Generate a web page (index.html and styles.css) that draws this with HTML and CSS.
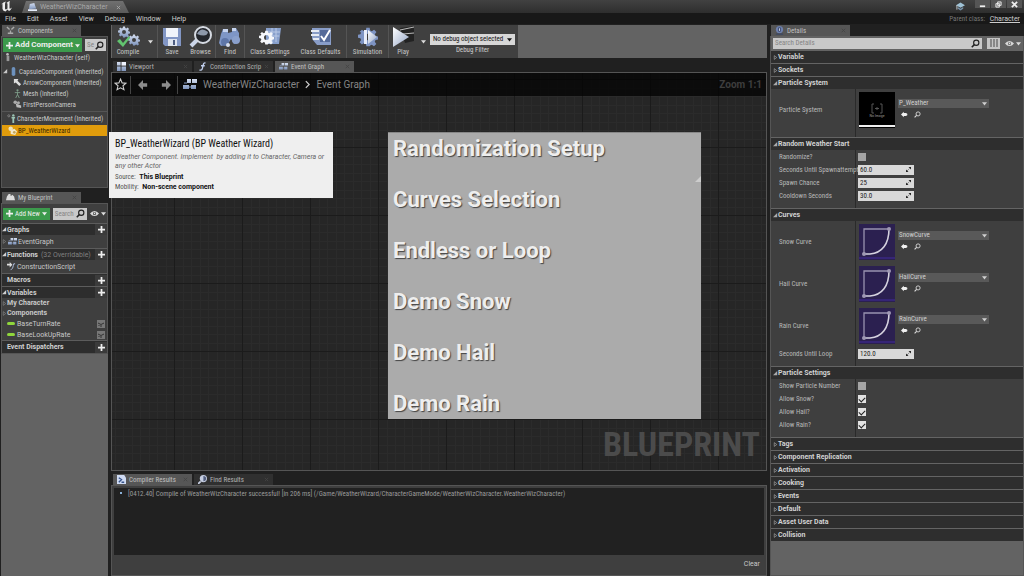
FILE: index.html
```html
<!DOCTYPE html>
<html lang="en">
<head>
<meta charset="utf-8">
<title>WeatherWizCharacter</title>
<link rel="stylesheet" href="styles.css">
</head>
<body>
<svg class="sprite" aria-hidden="true">
  <defs>
    <linearGradient id="steel" x1="0" y1="0" x2="0" y2="1"><stop offset="0" stop-color="#d5def0"/><stop offset="1" stop-color="#7f95bd"/></linearGradient>
    <linearGradient id="silver" x1="0" y1="0" x2="1" y2="1"><stop offset="0" stop-color="#ffffff"/><stop offset="1" stop-color="#93a5c6"/></linearGradient>
    <symbol id="gear" viewBox="0 0 24 24"><path fill-rule="evenodd" d="M10 1h4l.6 3.2 2 .9 2.7-1.9 2.8 2.8-1.9 2.7.9 2 3 .6v3.6l-3.1.7-.9 2 1.9 2.7-2.8 2.8-2.7-1.9-2 .9L14 23h-4l-.6-3-2-.9-2.700 1.900-2.800-2.800 1.900-2.700-.9-2-3-.7v-3.600l3-.6.9-2L1.900 6l2.800-2.800 2.700 1.900 2-.9zM12 8a4 4 0 1 0 0 8 4 4 0 0 0 0-8z"/></symbol>
    <symbol id="search" viewBox="0 0 12 12"><circle cx="7" cy="5" r="3.500" fill="none" stroke="currentColor" stroke-width="1.500"/><path d="M4.500 7.500 1 11" stroke="currentColor" stroke-width="2"/></symbol>
    <symbol id="eye" viewBox="0 0 14 10"><path fill="#d8d8d8" fill-rule="evenodd" d="M0 5Q3 1 7 1t7 4Q11 9 7 9T0 5zm7-2.500a2.500 2.500 0 1 0 0 5 2.500 2.500 0 0 0 0-5z"/><circle cx="7" cy="4.800" r="1.300" fill="#e4e4e4"/></symbol>
    <symbol id="down" viewBox="0 0 8 6"><path d="M0 1h8L4 6z" fill="currentColor"/></symbol>
    <symbol id="plus" viewBox="0 0 8 8"><path d="M3 0h2v3h3v2H5v3H3V5H0V3h3z" fill="currentColor"/></symbol>
    <symbol id="open" viewBox="0 0 6 6"><path d="M0 5 5 0v5z" fill="currentColor"/></symbol>
    <symbol id="shut" viewBox="0 0 6 8"><path d="M1 1v6l4-3z" fill="none" stroke="currentColor"/></symbol>
    <symbol id="cross" viewBox="0 0 6 6"><path d="M1 1l4 4M5 1 1 5" stroke="currentColor"/></symbol>
    <symbol id="left" viewBox="0 0 12 12"><path d="M0 6 6 0v4h5v4H6v4z" fill="currentColor"/></symbol>
    <symbol id="right" viewBox="0 0 12 12"><path d="M12 6 6 0v4H1v4h5v4z" fill="currentColor"/></symbol>
    <symbol id="graph" viewBox="0 0 14 11"><path fill="url(#steel)" d="M4 0h4v4H4zM9 0h5v4H9zM0 6h6v4H0zM8 6h5v4H8z"/><path d="M1 4h3M6 8h2" stroke="#8698bb"/></symbol>
    <symbol id="viewport" viewBox="0 0 10 10"><path fill="url(#steel)" d="M0 0h4v4H0zM0 5h4v5H0zM5 5h5v5H5z"/><path fill="#eef3ff" d="M5 0h5v4H5z"/></symbol>
    <symbol id="func" viewBox="0 0 10 12"><path d="M9 1.500Q6.500.5 6 4L5 8Q4 12 1 10.500M3 5h5" fill="none" stroke="#c2d0ee" stroke-width="1.700"/></symbol>
    <symbol id="spin" viewBox="0 0 8 8"><path d="M4 0h4v4zM0 4v4h4z" fill="#222"/><path d="m2 6 4-4" stroke="#222" stroke-dasharray="1.500 1"/></symbol>
    <symbol id="use-asset" viewBox="0 0 10 8"><path d="M0 4 4 0v2h4v1h1v2H8v1H4v2z" fill="#f0f0f0"/></symbol>
    <symbol id="curve" viewBox="0 0 36 36"><path fill="#2b2050" d="M0 0h36v36H0z"/><path d="M5 30V5h25" fill="none" stroke="#9992b0" stroke-width="1.300"/><path d="M5 30h6C23 29 30 20 30 5" fill="none" stroke="#d5d2df" stroke-width="1.600"/><circle cx="5" cy="30" r="2" fill="#9f98b4"/><circle cx="30" cy="5" r="2" fill="#9f98b4"/><path d="M0 34h36" stroke="#432a9d" stroke-width="1"/></symbol>
  </defs>
</svg>

<div class="app">
  <header class="titlebar">
    <svg class="logo" viewBox="0 0 24 26"><path fill="#eee" d="M1 9Q4 4 10 3 8 5 8 8v9q0 2 2 2 2-1 3-2V8q0-2-2-2 3-3 7-4-1 2-1 4v10q0 2 2 1l3-2q-2 5-6 7l-3-3-4 4q-5-1-6-5V9q0-2-2-1z"/></svg>
    <div class="title-tab"><svg class="i9" viewBox="0 0 10 10"><path fill="url(#steel)" d="m2 1 5-1 2 6-8 1z"/><path fill="#e8eefc" d="M0 7h10v2H0z"/></svg><span>WeatherWizCharacter</span><svg class="i5"><use href="#cross"/></svg></div>
    <div class="window-tools">
      <svg class="cap" viewBox="0 0 10 9"><path fill="#9fc2d6" d="m0 3 5-3 5 3-5 3z"/><path fill="#7590a8" d="M2 5v2l3 2 3-2V5L5 7z"/><path d="M1 3v5" stroke="#ccc"/></svg>
      <div class="window-buttons">
        <button aria-label="Minimize"><svg viewBox="0 0 8 8"><path d="M1 5h6v2H1z" fill="#eee"/></svg></button>
        <button aria-label="Restore"><svg viewBox="0 0 8 8"><path d="M3 1h4v4H3zM1 3h4v4H1z" stroke="#eee" fill="#777"/></svg></button>
        <button aria-label="Close"><svg viewBox="0 0 8 8"><path d="m1 1 6 6M7 1 1 7" stroke="#eee" stroke-width="2"/></svg></button>
      </div>
    </div>
  </header>
  <nav class="menubar">
    <button>File</button><button>Edit</button><button>Asset</button><button>View</button><button>Debug</button><button>Window</button><button>Help</button>
    <span class="parent">Parent class: <a href="#">Character</a></span>
  </nav>

  <div class="workspace">
    <aside class="left">
      <div class="tab panel-tab active"><svg class="i9" viewBox="0 0 10 10"><path d="m1 1 3 3M9 1 6 4M5 5v4M2 8h6" stroke="#aaa" stroke-width="1.500"/></svg><span>Components</span><svg class="i5"><use href="#cross"/></svg></div>
      <section class="panel components">
        <div class="tools">
          <button class="green wide"><svg class="i7"><use href="#plus"/></svg>Add Component<svg class="i5"><use href="#down"/></svg></button>
          <label class="search"><input type="text" placeholder="Se" aria-label="Search components"><svg class="i9"><use href="#search"/></svg></label>
        </div>
        <div class="item self"><svg class="i9" viewBox="0 0 10 10"><circle cx="5" cy="1.500" r="1.500" fill="#bbb"/><path d="M4 3h3v6H4z" fill="#999"/></svg>WeatherWizCharacter (self)</div>
        <ul class="tree">
          <li class="item"><svg class="i5"><use href="#open"/></svg><svg class="i9" viewBox="0 0 10 10"><rect x="3" width="4" height="10" rx="2" fill="#6d91bd"/></svg>CapsuleComponent (Inherited)</li>
          <li class="item child"><svg class="i9" viewBox="0 0 10 10"><path d="M1 1h5L5 3l4 4-2 2-4-4-2 1z" fill="#ddd"/></svg>ArrowComponent (Inherited)</li>
          <li class="item child"><svg class="i9" viewBox="0 0 10 10"><circle cx="5" cy="1.500" r="1.200" fill="#7d9c88"/><path d="M2 4h6M5 3v4M5 6 3 10M5 6l2 4" stroke="#7d9c88"/></svg>Mesh (Inherited)</li>
          <li class="item child"><svg class="i9" viewBox="0 0 10 10"><circle cx="2.500" cy="2.500" r="2" fill="#aaa"/><circle cx="6" cy="3" r="1.700" fill="#aaa"/><path d="m3 4 6 2v3L4 8z" fill="#bbb"/></svg>FirstPersonCamera</li>
          <li class="item movement"><svg class="i9" viewBox="0 0 10 10"><circle cx="2" cy="2" r="1.200" fill="none" stroke="#999" stroke-width=".7"/><circle cx="7" cy="1.500" r="1.300" fill="#9cc4b5"/><path d="M5 4h4M7 3v7" stroke="#9cc4b5" stroke-width="2"/></svg>CharacterMovement (Inherited)</li>
          <li class="item selected"><svg class="i9" viewBox="0 0 10 10"><circle cx="3" cy="3" r="2.500" fill="#eee2bf"/><path d="m3 5 4-2 3 3-2 4-5-1z" fill="#f1e8cc"/><circle cx="7" cy="7" r="1.500" fill="#c4a75a"/></svg>BP_WeatherWizard</li>
        </ul>
      </section>

      <div class="tab panel-tab active"><svg class="i9" viewBox="0 0 10 10"><path d="M1 4 3 1h2v2h1l1-1 2 2 1 4H0z" fill="#ddd"/></svg><span>My Blueprint</span><svg class="i5"><use href="#cross"/></svg></div>
      <section class="panel blueprint">
        <div class="tools">
          <button class="green"><svg class="i7"><use href="#plus"/></svg>Add New<svg class="i5"><use href="#down"/></svg></button>
          <label class="search"><input type="text" placeholder="Search" aria-label="Search blueprint"><svg class="i9"><use href="#search"/></svg></label>
          <button class="view" aria-label="View options"><svg class="eye"><use href="#eye"/></svg><svg class="i5"><use href="#down"/></svg></button>
        </div>
        <h2 class="group"><svg class="i5"><use href="#open"/></svg>Graphs<button aria-label="Add graph"><svg class="i7"><use href="#plus"/></svg></button></h2>
        <div class="entry"><svg class="i5"><use href="#shut"/></svg><svg class="i9"><use href="#graph"/></svg>EventGraph</div>
        <h2 class="group"><svg class="i5"><use href="#open"/></svg>Functions <small>(32 Overridable)</small><button aria-label="Add function"><svg class="i7"><use href="#plus"/></svg></button></h2>
        <div class="entry inset"><svg class="i9" viewBox="0 0 10 10"><path d="M0 2h3V0l3 3-3 3V4H0z" fill="#ddd"/><path d="M9 2Q7 1 7 4T4 9" stroke="#b5c5e8" fill="none"/></svg>ConstructionScript</div>
        <h2 class="group noarrow">Macros<button aria-label="Add macro"><svg class="i7"><use href="#plus"/></svg></button></h2>
        <h2 class="group"><svg class="i5"><use href="#open"/></svg>Variables<button aria-label="Add variable"><svg class="i7"><use href="#plus"/></svg></button></h2>
        <div class="entry short bold"><svg class="i5"><use href="#shut"/></svg>My Character</div>
        <div class="entry short bold"><svg class="i5"><use href="#shut"/></svg>Components</div>
        <div class="entry variable inset"><i class="pill"></i>BaseTurnRate<svg class="lid" viewBox="0 0 8 8"><path fill="#777" d="M0 0h8v8H0z"/><path d="M1 3q3 3 6 0M2 5v1M4 5v2" fill="none" stroke="#333"/></svg></div>
        <div class="entry variable inset"><i class="pill"></i>BaseLookUpRate<svg class="lid" viewBox="0 0 8 8"><path fill="#777" d="M0 0h8v8H0z"/><path d="M1 3q3 3 6 0M2 5v1M4 5v2" fill="none" stroke="#333"/></svg></div>
        <h2 class="group noarrow">Event Dispatchers<button aria-label="Add dispatcher"><svg class="i7"><use href="#plus"/></svg></button></h2>
      </section>
      <div class="tip" role="tooltip">
        <h3>BP_WeatherWizard (BP Weather Wizard)</h3>
        <p class="about">Weather Component. Implement&nbsp; by adding it to Character, Camera or any other Actor</p>
        <p>Source: <b>This Blueprint</b></p>
        <p>Mobility: <b>Non-scene component</b></p>
      </div>
    </aside>

    <main class="center">
      <div class="toolbar">
        <div class="toolset">
          <button class="tool"><svg viewBox="0 0 24 22"><use href="#gear" x="2" y="0" width="12" height="12" fill="url(#steel)"/><use href="#gear" x="12" y="8" width="12" height="12" fill="url(#steel)"/><path d="m1 15 3-2 3 4 6-7 1 2-7 9z" fill="#62c46f"/></svg>Compile</button>
          <button class="more" aria-label="Compile options"><svg class="i5"><use href="#down"/></svg></button>
          <button class="tool narrow edge"><svg viewBox="0 0 24 22"><path d="M3 2h18v18H5l-2-2z" fill="#8296c4"/><path d="M6 2h12v9H6z" fill="#f0f3fa"/><path d="M8 13h9v7H8z" fill="#dde3ee"/><path d="M13 14h2v5h-2z" fill="#4c5c80"/></svg>Save</button>
          <button class="tool narrow"><svg viewBox="0 0 24 22"><path d="m9 13-7 7" stroke="#cbd5e8" stroke-width="4"/><circle cx="14" cy="9" r="8" fill="#23262c" stroke="#d5dae2" stroke-width="2"/><path d="M8 8Q12 0 19 6q-1 6-11 2z" fill="#8d99ab"/></svg>Browse</button>
          <button class="tool narrow edge"><svg viewBox="0 0 24 22"><path d="M3 8 5 3h5v4l4-1V2h4l3 5v9l-5 2-3-5-3 5-7 2-2-3z" fill="#7e96c6"/><path d="M5 3h5v3H5zM14 2h4v3h-4z" fill="#c6d4ef"/><circle cx="7" cy="16" r="4" fill="#5e76a8"/><circle cx="18" cy="14" r="4" fill="#8aa0cc"/><circle cx="10" cy="19" r="2" fill="#d6ddec"/></svg>Find</button>
          <button class="tool large edge"><svg viewBox="0 0 24 22"><path d="M8 2h15l-2 16H8z" fill="#88a0cc"/><path d="M10 6h12M10 10h11M14 2v14M18 2v14" stroke="#b9c9e6"/><use href="#gear" x="1" y="4" width="15" height="15" fill="#f5f7fb"/></svg>Class Settings</button>
          <button class="tool large"><svg viewBox="0 0 24 22"><path d="M3 2h19v17H8l-5-6z" fill="#899dc8"/><path d="M2 5h8M2 9h8M4 13h6" stroke="#e7ebf4" stroke-width="2"/><path d="M11 4h10v12H11z" fill="#566b99"/><path d="m12 10 3 4 6-10" stroke="#fff" stroke-width="2" fill="none"/></svg>Class Defaults</button>
          <button class="tool medium edge"><svg viewBox="0 0 24 22"><use href="#gear" x="2" y="1" width="20" height="20" fill="#7e94c3"/><path d="M8 4h3v14H8z" fill="#e7edfa"/><path d="m12 4 9 7-9 7z" fill="url(#silver)"/></svg>Simulation</button>
          <button class="tool narrow edge"><svg viewBox="0 0 24 22"><path d="M9 2l14-2v15l-9 2z" fill="#222"/><path d="m9 4 14-3M12 8l11-1" stroke="#bbb"/><path d="M2 1v20l16-10z" fill="url(#silver)"/></svg>Play</button>
          <button class="more" aria-label="Play options"><svg class="i5"><use href="#down"/></svg></button>
          <label class="debug"><span class="debug-pick"><select><option>No debug object selected</option></select><svg class="i5"><use href="#down"/></svg></span>Debug Filter</label>
        </div>
      </div>

      <div class="tabs">
        <div class="tab"><svg class="i9"><use href="#viewport"/></svg><span>Viewport</span><svg class="i5"><use href="#cross"/></svg></div>
        <div class="tab"><svg class="i9"><use href="#func"/></svg><span>Construction Scrip</span><svg class="i5"><use href="#cross"/></svg></div>
        <div class="tab active"><svg class="i9"><use href="#graph"/></svg><span>Event Graph</span><svg class="i5"><use href="#cross"/></svg></div>
      </div>

      <section class="canvas">
        <svg class="grid" aria-hidden="true"><defs><pattern id="cells" width="68" height="68" patternUnits="userSpaceOnUse" x="62" y="6"><path d="M9.500 0v68M17.500 0v68M26.500 0v68M34.500 0v68M43.500 0v68M51.500 0v68M60.500 0v68M0 9.500h68M0 17.500h68M0 26.500h68M0 34.500h68M0 43.500h68M0 51.500h68M0 60.500h68" stroke="#2b2b2b"/><path d="M.5 0v68M0 .5h68" stroke="#1b1b1b"/></pattern></defs><rect width="100%" height="100%" fill="url(#cells)"/></svg>
        <div class="crumbs">
          <button class="crumb-star" aria-label="Favorite"><svg class="i13" viewBox="0 0 12 12"><path d="m6 1 1.500 3.500 3.500.3-2.700 2.400.9 3.600L6 9l-3.200 1.800.9-3.600L1 4.800l3.500-.3z" fill="none" stroke="#ccc"/></svg></button>
          <button class="nav" aria-label="Back"><svg class="i10"><use href="#left"/></svg></button>
          <button class="nav" aria-label="Forward"><svg class="i10"><use href="#right"/></svg></button>
          <div class="path"><svg class="i14"><use href="#graph"/></svg><span>WeatherWizCharacter</span><svg class="chev" viewBox="0 0 6 10"><path d="m1 1 4 4-4 4" fill="none" stroke="#ccc" stroke-width="1.500"/></svg><span>Event Graph</span></div>
          <span class="zoom">Zoom 1:1</span>
        </div>
        <div class="node">
          <h1>Randomization Setup</h1><h1>Curves Selection</h1><h1>Endless or Loop</h1><h1>Demo Snow</h1><h1>Demo Hail</h1><h1>Demo Rain</h1>
        </div>
        <div class="watermark">BLUEPRINT</div>
      </section>

      <div class="tabs results-tabs">
        <div class="tab active"><svg class="i9" viewBox="0 0 10 10"><path d="M0 0h8l2 3v7H0z" fill="#cfdbf3"/><path d="m2 3 3 2-3 3M5 8h3" fill="none" stroke="#36538a" stroke-width="1.500"/></svg><span>Compiler Results</span><svg class="i5"><use href="#cross"/></svg></div>
        <div class="tab"><svg class="i9" viewBox="0 0 10 10"><circle cx="6" cy="4" r="4" fill="#c5cde0"/><path d="M6 1a3 3 0 0 1 0 6z" fill="#535f7f"/><path d="M3 7 0 10" stroke="#c5cde0" stroke-width="2"/></svg><span>Find Results</span><svg class="i5"><use href="#cross"/></svg></div>
      </div>
      <section class="results">
        <ul class="log"><li>[0412.40] Compile of WeatherWizCharacter successful! [in 206 ms] (/Game/WeatherWizard/CharacterGameMode/WeatherWizCharacter.WeatherWizCharacter)</li></ul>
        <div class="log-foot"><button>Clear</button></div>
      </section>
    </main>

    <aside class="right">
      <div class="tab panel-tab active"><svg class="i9" viewBox="0 0 10 10"><circle cx="5" cy="4" r="4" fill="#6d7fac"/><path d="M4 2h2v4H4zM1 9h8" fill="#e2e7f2" stroke="#303f66"/></svg><span>Details</span><svg class="i5"><use href="#cross"/></svg></div>
      <section class="details">
        <div class="detail-tools">
          <label class="search"><input type="text" placeholder="Search Details" aria-label="Search Details"><svg class="i9"><use href="#search"/></svg></label>
          <button class="matrix" aria-label="Property matrix"><svg viewBox="0 0 8 8"><path d="M0 0h2v8H0zM3 0h2v8H3zM6 0h2v8H6z" fill="#888"/></svg></button>
          <button class="view" aria-label="View options"><svg class="eye"><use href="#eye"/></svg><svg class="i5"><use href="#down"/></svg></button>
        </div>
        <button class="cat"><svg class="i5"><use href="#shut"/></svg>Variable</button>
        <button class="cat"><svg class="i5"><use href="#shut"/></svg>Sockets</button>
        <button class="cat"><svg class="i5"><use href="#open"/></svg>Particle System</button>
        <div class="props">
          <div class="prop asset"><label for="ps">Particle System</label><div class="value"><svg class="thumb" viewBox="0 0 36 36"><path d="M0 0h36v36H0z"/><path d="M15 12h-2v9h2M21 12h2v9h-2M16 16.500h4M18 15v3" stroke="#555" fill="none"/><path d="M0 34h36" stroke="#eee" stroke-width="2"/><text x="18" y="25" class="noimage">No Image</text></svg>
            <div class="pick"><span class="drop"><select id="ps"><option>P_Weather</option></select><svg class="i5"><use href="#down"/></svg></span><span class="acts"><button aria-label="Use selected"><svg class="i7"><use href="#use-asset"/></svg></button><button aria-label="Browse to asset"><svg class="i7"><use href="#search"/></svg></button></span></div></div></div>
        </div>
        <button class="cat"><svg class="i5"><use href="#open"/></svg>Random Weather Start</button>
        <div class="props">
          <div class="prop"><label for="rnd">Randomize?</label><div class="value"><input type="checkbox" id="rnd"></div></div>
          <div class="prop"><label for="sus">Seconds Until Spawnattempt</label><div class="value"><span class="num"><input type="text" id="sus" value="60.0"><svg class="i5"><use href="#spin"/></svg></span></div></div>
          <div class="prop"><label for="spc">Spawn Chance</label><div class="value"><span class="num"><input type="text" id="spc" value="25"><svg class="i5"><use href="#spin"/></svg></span></div></div>
          <div class="prop"><label for="cds">Cooldown Seconds</label><div class="value"><span class="num"><input type="text" id="cds" value="30.0"><svg class="i5"><use href="#spin"/></svg></span></div></div>
        </div>
        <button class="cat"><svg class="i5"><use href="#open"/></svg>Curves</button>
        <div class="props">
          <div class="prop asset"><label for="sc">Snow Curve</label><div class="value"><svg class="thumb"><use href="#curve"/></svg><div class="pick"><span class="drop"><select id="sc"><option>SnowCurve</option></select><svg class="i5"><use href="#down"/></svg></span><span class="acts"><button aria-label="Use selected"><svg class="i7"><use href="#use-asset"/></svg></button><button aria-label="Browse to asset"><svg class="i7"><use href="#search"/></svg></button></span></div></div></div>
          <div class="prop asset"><label for="hc">Hail Curve</label><div class="value"><svg class="thumb"><use href="#curve"/></svg><div class="pick"><span class="drop"><select id="hc"><option>HailCurve</option></select><svg class="i5"><use href="#down"/></svg></span><span class="acts"><button aria-label="Use selected"><svg class="i7"><use href="#use-asset"/></svg></button><button aria-label="Browse to asset"><svg class="i7"><use href="#search"/></svg></button></span></div></div></div>
          <div class="prop asset"><label for="rc">Rain Curve</label><div class="value"><svg class="thumb"><use href="#curve"/></svg><div class="pick"><span class="drop"><select id="rc"><option>RainCurve</option></select><svg class="i5"><use href="#down"/></svg></span><span class="acts"><button aria-label="Use selected"><svg class="i7"><use href="#use-asset"/></svg></button><button aria-label="Browse to asset"><svg class="i7"><use href="#search"/></svg></button></span></div></div></div>
          <div class="prop"><label for="sul">Seconds Until Loop</label><div class="value"><span class="num"><input type="text" id="sul" value="120.0"><svg class="i5"><use href="#spin"/></svg></span></div></div>
        </div>
        <button class="cat"><svg class="i5"><use href="#open"/></svg>Particle Settings</button>
        <div class="props">
          <div class="prop"><label for="spn">Show Particle Number</label><div class="value"><input type="checkbox" id="spn"></div></div>
          <div class="prop"><label for="as">Allow Snow?</label><div class="value"><input type="checkbox" id="as" checked></div></div>
          <div class="prop"><label for="ah">Allow Hail?</label><div class="value"><input type="checkbox" id="ah" checked></div></div>
          <div class="prop"><label for="ar">Allow Rain?</label><div class="value"><input type="checkbox" id="ar" checked></div></div>
        </div>
        <button class="cat"><svg class="i5"><use href="#shut"/></svg>Tags</button>
        <button class="cat"><svg class="i5"><use href="#shut"/></svg>Component Replication</button>
        <button class="cat"><svg class="i5"><use href="#shut"/></svg>Activation</button>
        <button class="cat"><svg class="i5"><use href="#shut"/></svg>Cooking</button>
        <button class="cat"><svg class="i5"><use href="#shut"/></svg>Events</button>
        <button class="cat"><svg class="i5"><use href="#shut"/></svg>Default</button>
        <button class="cat"><svg class="i5"><use href="#shut"/></svg>Asset User Data</button>
        <button class="cat"><svg class="i5"><use href="#shut"/></svg>Collision</button>
      </section>
    </aside>
  </div>
</div>
</body>
</html>
```
FILE: styles.css
```css
* { box-sizing: border-box; margin: 0; padding: 0; }
body { font: 7px/10px "Roboto Condensed", Roboto, "Liberation Sans", sans-serif; color: #c8c8c8; background: #202020; }
button, input, select { font: inherit; color: inherit; border: 0; background: none; appearance: none; border-radius: 0; outline: 0; min-width: 0; }
button { display: flex; align-items: center; white-space: nowrap; }
svg { display: block; flex: none; }
ul { list-style: none; }
.sprite { position: absolute; width: 0; height: 0; }
.i5 { width: 5px; height: 5px; }
.i7 { width: 7px; height: 7px; }
.i9 { width: 9px; height: 9px; }
.i10 { width: 10px; height: 10px; }
.i13 { width: 13px; height: 13px; }
.i14 { width: 14px; height: 11px; }
.eye { width: 9px; height: 7px; }

.app { display: flex; flex-direction: column; height: 100vh; overflow: hidden; }
.titlebar { display: flex; align-items: flex-end; height: 13px; flex: none; background: linear-gradient(#414141, #2e2e2e); }
.logo { width: 14px; height: 13px; margin-right: 8px; }
.title-tab { display: flex; align-items: center; gap: 3px; width: 107px; height: 12px; padding: 0 8px 0 6px; background: linear-gradient(#707070, #5a5a5a); clip-path: polygon(4px 0, 101px 0, 100% 100%, 0 100%); color: #a8a8a8; font-family: Roboto, sans-serif; }
.title-tab span { flex: 1; }
.window-tools { display: flex; align-self: flex-start; align-items: flex-start; gap: 10px; margin-left: auto; padding-right: 2px; }
.cap { width: 9px; height: 9px; margin-top: 2px; }
.window-buttons { display: flex; gap: 1px; }
.window-buttons button { width: 15px; height: 8px; justify-content: center; background: #555; }
.window-buttons button svg { width: 7px; height: 7px; }
.menubar { display: flex; align-items: center; gap: 11px; height: 11px; flex: none; padding: 0 4px 0 5px; background: #181818; color: #ccc; font-family: Roboto, sans-serif; }
.parent { margin-left: auto; color: #777; font-family: "Roboto Condensed", Roboto, sans-serif; }
.parent a { color: #ccc; margin-left: 3px; font-family: Roboto, sans-serif; }

.workspace { display: grid; grid-template-columns: 109px minmax(0, 1fr) 254px; gap: 2px; flex: 1; min-height: 0; padding-top: 1px; }
.left { position: relative; display: flex; flex-direction: column; padding: 0 1px; }
.tab { display: flex; align-items: center; gap: 3px; width: 79px; height: 11px; padding: 0 4px; background: #303030; color: #b0b0b0; white-space: nowrap; }
.tab.active { background: #565656; color: #c0c0c0; }
.tab span { flex: 1; }
.tab .i5 { color: #444; }
.panel-tab { margin-left: 1px; flex: none; }
.panel { border: 1px solid #555; background: #3f3f3f; }
.components { height: 152px; margin-bottom: 4px; flex: none; }
.tools { display: flex; align-items: center; gap: 3px; padding: 1px 1px 0; }
.green { gap: 2px; height: 12px; padding: 0 3px; background: #3c9a4c; color: #eee; }
.green.wide { height: 14px; width: 79px; padding: 0 4px 0 3px; font: 700 8px/10px Roboto, sans-serif; }
.green.wide .i5:last-child { margin-left: auto; }
.search { display: flex; align-items: center; flex: 1; min-width: 0; height: 12px; padding: 0 2px; background: #c9c9c9; color: #222; }
.search input { flex: 1; width: 0; }
.search input::placeholder { color: #858585; opacity: 1; }
.item { display: flex; align-items: center; gap: 1px; height: 11px; padding-left: 1px; white-space: nowrap; }
.self { gap: 2px; margin-bottom: 3px; }
.child { padding-left: 11px; }
.movement { height: 14px; margin-top: 1px; padding-left: 5px; border-top: 1px solid #555; }
.selected { padding-left: 6px; background: #e09c0c; color: #3a2900; }

.blueprint .tools { height: 19px; padding-top: 0; }
.view { gap: 2px; color: #ddd; }
.group { display: flex; align-items: center; gap: 0; height: 12px; border-top: 1px solid #5c5c5c; background: #2d2d2d; font: 700 7px/10px Roboto, sans-serif; color: #d0d0d0; }
.group small { font-size: 7px; font-weight: 400; color: #808080; margin-left: 3px; }
.group button { margin-left: auto; width: 12px; height: 11px; justify-content: center; background: #3b3b3b; color: #eee; }
.noarrow { height: 13px; padding-left: 5px; }
.entry { display: flex; align-items: center; gap: 1px; height: 13px; font-family: Roboto, sans-serif; }
.entry .i5 { color: #888; }
.short { height: 10px; }
.variable { height: 11px; }
.bold { font-weight: 700; gap: 0; }
.inset { padding-left: 5px; }
.pill { width: 8px; height: 3px; margin-right: 1px; border-radius: 2px; background: #8fd63c; }
.lid { width: 8px; height: 8px; margin-left: auto; margin-right: 2px; }
.left::after { content: ""; flex: 1; background: #636363; }
.tip { position: absolute; z-index: 3; left: 109px; top: 107px; width: 224px; padding: 6px; background: #efefef; color: #555; }
.tip h3 { font-size: 10px; line-height: 11px; font-weight: 400; color: #111; margin-bottom: 4px; }
.tip .about { font-family: Roboto, sans-serif; font-style: italic; line-height: 9px; margin-bottom: 1px; color: #666; }
.tip b { margin-left: 2px; font-family: Roboto, sans-serif; color: #111; }

.center { display: flex; flex-direction: column; min-width: 0; padding-right: 1px; }
.toolbar { display: flex; height: 33px; flex: none; margin-bottom: 3px; background: #636363; }
.toolset { display: flex; align-items: stretch; background: #404040; padding-right: 3px; border-left: 1px solid #666; }
.tool { flex-direction: column; width: 32px; line-height: 9px; padding-top: 1px; color: #c4c4c4; }
.tool svg { width: 24px; height: 22px; }
.narrow { width: 29px; }
.medium { width: 42px; }
.large { width: 51px; }
.edge { border-left: 1px solid #545454; }
.more { width: 13px; justify-content: center; color: #ddd; }
.debug { display: flex; flex-direction: column; align-items: center; justify-content: center; padding-top: 5px; color: #ccc; }
.debug-pick { display: flex; align-items: center; height: 11px; width: 85px; padding: 0 3px; background: #d7d7d7; color: #151515; }
.debug-pick select { flex: 1; }
.tabs { display: flex; gap: 2px; flex: none; padding-left: 2px; }
.canvas { position: relative; flex: 1; min-height: 0; margin-bottom: 3px; border: 1px solid #555; background: #262626; overflow: hidden; }
.grid { position: absolute; width: 100%; height: 100%; }
.crumbs { position: relative; display: flex; align-items: center; height: 23px; padding: 0 4px 0 2px; background: rgba(0, 0, 0, .7); color: #858585; font: 10px/12px Roboto, sans-serif; }
.crumb-star { height: 18px; padding-right: 3px; border-right: 1px solid #444; }
.nav { width: 23px; height: 18px; justify-content: center; color: #8d8d8d; }
.path { display: flex; align-items: center; gap: 6px; height: 18px; padding-left: 5px; border-left: 1px solid #444; }
.chev { width: 5px; height: 9px; }
.zoom { margin-left: auto; color: #3e3e3e; font-weight: 700; }
.node { position: absolute; left: 276px; top: 59px; width: 313px; height: 287px; padding-left: 5px; background: #ababab; border-top: 1px solid #888; }
.node h1 { height: 51px; padding-top: 3px; font: 700 22px/26px Roboto, sans-serif; color: #eee; text-shadow: 1px 1px 1px #444; }
.node::after { content: ""; position: absolute; right: 0; top: 43px; border: 3px solid #ccc; border-top-color: transparent; border-left-color: transparent; }
.watermark { position: absolute; right: 6px; bottom: 6px; font: 700 34px/40px "Roboto Condensed", "Liberation Sans Narrow", Roboto, sans-serif; color: #4b4b4b; }
.results { display: flex; flex-direction: column; height: 91px; flex: none; padding: 2px; border: 1px solid #555; background: #3f3f3f; }
.log { flex: 1; padding: 1px 6px; background: #212121; color: #9a9a9a; }
.log li::before { content: ""; display: inline-block; width: 2px; height: 2px; margin-right: 6px; vertical-align: 2px; background: #8ab0d8; }
.log-foot { display: flex; justify-content: flex-end; align-items: center; height: 18px; padding-right: 4px; font-family: Roboto, sans-serif; }

.right { display: flex; flex-direction: column; min-width: 0; }
.details { flex: 1; border: 1px solid #555; border-top: 0; background: #636363; }
.detail-tools { display: flex; align-items: center; gap: 5px; height: 14px; padding: 0 2px; }
.detail-tools .search { height: 11px; }
.matrix { width: 13px; height: 11px; justify-content: center; background: #c5c5c5; }
.matrix svg { width: 8px; height: 8px; }
.cat { width: 100%; height: 13px; padding-left: 2px; gap: 0; border-top: 1px solid #646464; background: #2e2e2e; color: #d2d2d2; font: 700 7px/10px Roboto, sans-serif; }
.cat .i5 { color: #aaa; }
.props { padding-bottom: 6px; background: linear-gradient(90deg, transparent 84px, #2a2a2a 84px, #2a2a2a 85px, transparent 85px), #3f3f3f; }
.prop { display: grid; grid-template-columns: 84px minmax(0, 1fr); align-items: center; height: 13px; color: #b8b8b8; }
.prop label { padding-left: 8px; white-space: nowrap; }
.value { display: flex; align-items: center; gap: 3px; padding-left: 3px; }
.asset { height: 42px; }
.thumb { width: 36px; height: 36px; margin-left: 1px; }
.noimage { font-size: 4px; fill: #999; text-anchor: middle; }
.pick { display: flex; flex-direction: column; gap: 3px; width: 91px; padding-bottom: 3px; }
.drop { display: flex; align-items: center; height: 9px; padding-right: 2px; background: #595959; color: #d0d0d0; }
.drop select { flex: 1; height: 9px; line-height: 9px; padding-left: 1px; }
.acts { display: flex; gap: 6px; padding-left: 3px; color: #ddd; }
.num { display: flex; align-items: center; width: 56px; height: 10px; padding: 0 3px 0 2px; background: #d9d9d9; color: #222; }
.num input { flex: 1; width: 0; height: 10px; }
input[type="checkbox"] { display: flex; align-items: center; justify-content: center; width: 8px; height: 8px; background: #a5a5a5; }
input[type="checkbox"]:checked { background: #e2e2e2; }
input[type="checkbox"]:checked::after { content: ""; width: 5px; height: 3px; border: solid #222; border-width: 0 0 1px 1px; transform: rotate(-45deg); }
```
